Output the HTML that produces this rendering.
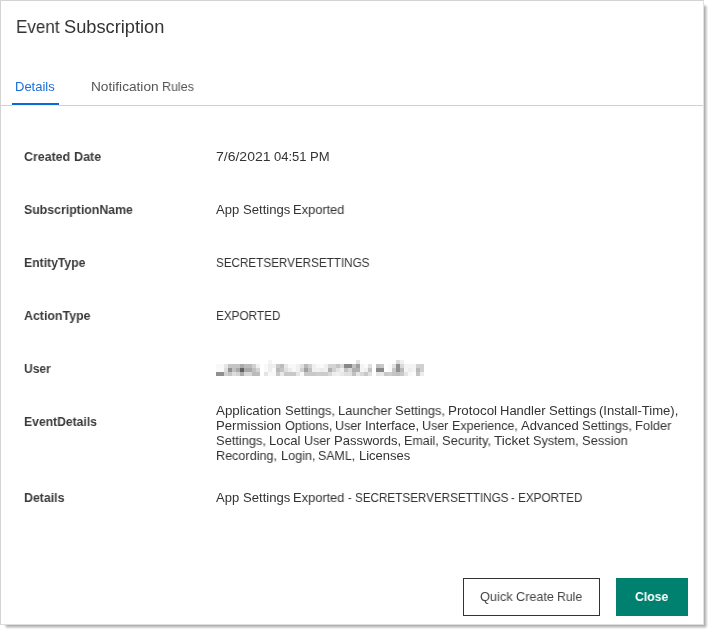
<!DOCTYPE html>
<html lang="en"><head><meta charset="utf-8"><title>Event Subscription</title>
<style>
html,body{margin:0;padding:0;background:#fff;}
body{width:712px;height:633px;position:relative;overflow:hidden;font-family:"Liberation Sans",sans-serif;color:#333;font-size:13px;line-height:15px;}
.panel{position:absolute;left:0;top:0;width:702px;height:623px;border:1px solid #d3d3d3;border-right-color:#e2e2e2;border-bottom-color:#dedede;background:#fff;}
.shr{position:absolute;left:704px;top:8px;width:4px;height:617px;background:linear-gradient(to right,#a6a6a6,#fafafa);}
.shb{position:absolute;left:8px;top:625px;width:696px;height:4px;background:linear-gradient(to bottom,#a6a6a6,#fafafa);}
.c1,.c2,.c3{position:absolute;width:4px;height:4px;}
.c1{left:704px;top:4px;background:radial-gradient(circle at 0 100%,#a6a6a6 0,#fafafa 4px,#fff 4.5px);}
.c2{left:704px;top:625px;background:radial-gradient(circle at 0 0,#a6a6a6 0,#fafafa 4px,#fff 4.5px);}
.c3{left:4px;top:625px;background:radial-gradient(circle at 100% 0,#a6a6a6 0,#fafafa 4px,#fff 4.5px);}
.w{position:absolute;transform-origin:0 0;white-space:nowrap;line-height:15px;font-size:13px;color:#333;will-change:transform;}
.w.b{font-weight:bold;color:#3a3a3a;}
.w.h{font-size:18px;line-height:24px;}
h1,dl,dt,dd,ul,li,p{margin:0;padding:0;font:inherit;list-style:none;}
.hr{position:absolute;left:1px;top:105px;width:702px;height:1px;background:#d0d0d0;}
.ul{position:absolute;left:12px;top:103px;width:47px;height:2px;background:#0c68d6;}
.ulw{position:absolute;left:12px;top:105px;width:47px;height:1px;background:#f3eee8;}
.blur{position:absolute;left:216px;top:360px;}
.btn{position:absolute;top:578px;height:38px;box-sizing:border-box;}
.q{left:463px;width:137px;border:1px solid #333;background:#fff;}
.c{left:616px;width:72px;background:#00806f;}
</style></head><body>
<div class="panel"></div><div class="shr"></div><div class="shb"></div><div class="c1"></div><div class="c2"></div><div class="c3"></div>
<h1><span class="w h" style="left:15.50px;top:15px;transform:scaleX(0.9460);">Event</span> <span class="w h" style="left:64.25px;top:15px;transform:scaleX(1.0136);">Subscription</span></h1>
<ul class="tabs"><li><span class="w" style="left:15.40px;top:79px;transform:scaleX(0.9998);color:#1a6fd8;">Details</span></li><li><span class="w" style="left:91.10px;top:79px;transform:scaleX(1.0514);color:#555;">Notification</span> <span class="w" style="left:161.93px;top:79px;transform:scaleX(0.9599);color:#555;">Rules</span></li></ul>
<div class="hr"></div><div class="ulw"></div><div class="ul"></div>
<dl>
<dt><span class="w b" style="left:24.45px;top:149px;transform:scaleX(0.9511);">Created</span> <span class="w b" style="left:73.78px;top:149px;transform:scaleX(0.9644);">Date</span></dt><dd><span class="w" style="left:216.30px;top:149px;transform:scaleX(1.0771);">7/6/2021</span> <span class="w" style="left:274.03px;top:149px;transform:scaleX(0.9939);">04:51</span> <span class="w" style="left:309.60px;top:149px;transform:scaleX(1.0026);">PM</span></dd>
<dt><span class="w b" style="left:24.45px;top:202px;transform:scaleX(0.9486);">SubscriptionName</span></dt><dd><span class="w" style="left:216.30px;top:202px;transform:scaleX(0.9968);">App</span> <span class="w" style="left:242.59px;top:202px;transform:scaleX(1.0092);">Settings</span> <span class="w" style="left:293.22px;top:202px;transform:scaleX(0.9876);">Exported</span></dd>
<dt><span class="w b" style="left:24.45px;top:255px;transform:scaleX(0.9386);">EntityType</span></dt><dd><span class="w" style="left:216.30px;top:255px;transform:scaleX(0.8976);">SECRETSERVERSETTINGS</span></dd>
<dt><span class="w b" style="left:24.45px;top:308px;transform:scaleX(0.9520);">ActionType</span></dt><dd><span class="w" style="left:216.30px;top:308px;transform:scaleX(0.9028);">EXPORTED</span></dd>
<dt><span class="w b" style="left:24.45px;top:361px;transform:scaleX(0.9290);">User</span></dt><dd><svg class="blur" width="208" height="16" viewBox="0 0 208 16" shape-rendering="crispEdges"><rect x="52" y="0" width="4" height="4" fill="#f4f4f4"/><rect x="140" y="0" width="4" height="4" fill="#e4e4e4"/><rect x="180" y="0" width="4" height="4" fill="#dcdcdc"/><rect x="184" y="0" width="4" height="4" fill="#f0f0f0"/><rect x="0" y="4" width="4" height="4" fill="#f8f8f8"/><rect x="4" y="4" width="4" height="4" fill="#f8f8f8"/><rect x="8" y="4" width="4" height="4" fill="#e6e6e6"/><rect x="12" y="4" width="4" height="4" fill="#c4c4c4"/><rect x="16" y="4" width="4" height="4" fill="#c4c4c4"/><rect x="20" y="4" width="4" height="4" fill="#c4c4c4"/><rect x="24" y="4" width="4" height="4" fill="#aaaaaa"/><rect x="28" y="4" width="4" height="4" fill="#bbbbbb"/><rect x="32" y="4" width="4" height="4" fill="#bbbbbb"/><rect x="36" y="4" width="4" height="4" fill="#d0d0d0"/><rect x="40" y="4" width="4" height="4" fill="#f0f0f0"/><rect x="48" y="4" width="4" height="4" fill="#f8f8f8"/><rect x="52" y="4" width="4" height="4" fill="#eeeeee"/><rect x="56" y="4" width="4" height="4" fill="#f0f0f0"/><rect x="60" y="4" width="4" height="4" fill="#c8c8c8"/><rect x="64" y="4" width="4" height="4" fill="#bbbbbb"/><rect x="68" y="4" width="4" height="4" fill="#e8e8e8"/><rect x="72" y="4" width="4" height="4" fill="#f8f8f8"/><rect x="76" y="4" width="4" height="4" fill="#f8f8f8"/><rect x="80" y="4" width="4" height="4" fill="#f0f0f0"/><rect x="84" y="4" width="4" height="4" fill="#e0e0e0"/><rect x="88" y="4" width="4" height="4" fill="#b8b8b8"/><rect x="92" y="4" width="4" height="4" fill="#d0d0d0"/><rect x="96" y="4" width="4" height="4" fill="#f0f0f0"/><rect x="100" y="4" width="4" height="4" fill="#f8f8f8"/><rect x="104" y="4" width="4" height="4" fill="#fafafa"/><rect x="108" y="4" width="4" height="4" fill="#f0f0f0"/><rect x="112" y="4" width="4" height="4" fill="#d4d4d4"/><rect x="116" y="4" width="4" height="4" fill="#d4d4d4"/><rect x="120" y="4" width="4" height="4" fill="#c4c4c4"/><rect x="124" y="4" width="4" height="4" fill="#d8d8d8"/><rect x="128" y="4" width="4" height="4" fill="#888888"/><rect x="132" y="4" width="4" height="4" fill="#888888"/><rect x="136" y="4" width="4" height="4" fill="#c0c0c0"/><rect x="140" y="4" width="4" height="4" fill="#a0a0a0"/><rect x="144" y="4" width="4" height="4" fill="#f4f4f4"/><rect x="148" y="4" width="4" height="4" fill="#fafafa"/><rect x="152" y="4" width="4" height="4" fill="#e0e0e0"/><rect x="160" y="4" width="4" height="4" fill="#c0c0c0"/><rect x="164" y="4" width="4" height="4" fill="#c8c8c8"/><rect x="172" y="4" width="4" height="4" fill="#fafafa"/><rect x="176" y="4" width="4" height="4" fill="#e0e0e0"/><rect x="180" y="4" width="4" height="4" fill="#909090"/><rect x="184" y="4" width="4" height="4" fill="#d8d8d8"/><rect x="188" y="4" width="4" height="4" fill="#f4f4f4"/><rect x="192" y="4" width="4" height="4" fill="#f4f4f4"/><rect x="196" y="4" width="4" height="4" fill="#f4f4f4"/><rect x="200" y="4" width="4" height="4" fill="#d0d0d0"/><rect x="204" y="4" width="4" height="4" fill="#d0d0d0"/><rect x="0" y="8" width="4" height="4" fill="#fafafa"/><rect x="4" y="8" width="4" height="4" fill="#fafafa"/><rect x="8" y="8" width="4" height="4" fill="#dddddd"/><rect x="12" y="8" width="4" height="4" fill="#909090"/><rect x="16" y="8" width="4" height="4" fill="#c0c0c0"/><rect x="20" y="8" width="4" height="4" fill="#a8a8a8"/><rect x="24" y="8" width="4" height="4" fill="#606060"/><rect x="28" y="8" width="4" height="4" fill="#a8a8a8"/><rect x="32" y="8" width="4" height="4" fill="#a8a8a8"/><rect x="36" y="8" width="4" height="4" fill="#c0c0c0"/><rect x="40" y="8" width="4" height="4" fill="#d4d4d4"/><rect x="48" y="8" width="4" height="4" fill="#fafafa"/><rect x="52" y="8" width="4" height="4" fill="#eeeeee"/><rect x="56" y="8" width="4" height="4" fill="#fafafa"/><rect x="60" y="8" width="4" height="4" fill="#b8b8b8"/><rect x="64" y="8" width="4" height="4" fill="#c4c4c4"/><rect x="68" y="8" width="4" height="4" fill="#e0e0e0"/><rect x="72" y="8" width="4" height="4" fill="#ececec"/><rect x="76" y="8" width="4" height="4" fill="#f8f8f8"/><rect x="80" y="8" width="4" height="4" fill="#f0f0f0"/><rect x="84" y="8" width="4" height="4" fill="#d0d0d0"/><rect x="88" y="8" width="4" height="4" fill="#a0a0a0"/><rect x="92" y="8" width="4" height="4" fill="#c0c0c0"/><rect x="96" y="8" width="4" height="4" fill="#f0f0f0"/><rect x="100" y="8" width="4" height="4" fill="#f0f0f0"/><rect x="104" y="8" width="4" height="4" fill="#ececec"/><rect x="108" y="8" width="4" height="4" fill="#f0f0f0"/><rect x="112" y="8" width="4" height="4" fill="#b0b0b0"/><rect x="116" y="8" width="4" height="4" fill="#d0d0d0"/><rect x="120" y="8" width="4" height="4" fill="#e4e4e4"/><rect x="124" y="8" width="4" height="4" fill="#f0f0f0"/><rect x="128" y="8" width="4" height="4" fill="#c4c4c4"/><rect x="132" y="8" width="4" height="4" fill="#d8d8d8"/><rect x="136" y="8" width="4" height="4" fill="#b0b0b0"/><rect x="140" y="8" width="4" height="4" fill="#b0b0b0"/><rect x="144" y="8" width="4" height="4" fill="#f4f4f4"/><rect x="148" y="8" width="4" height="4" fill="#f0f0f0"/><rect x="152" y="8" width="4" height="4" fill="#c4c4c4"/><rect x="160" y="8" width="4" height="4" fill="#888888"/><rect x="164" y="8" width="4" height="4" fill="#888888"/><rect x="172" y="8" width="4" height="4" fill="#fafafa"/><rect x="176" y="8" width="4" height="4" fill="#c8c8c8"/><rect x="180" y="8" width="4" height="4" fill="#909090"/><rect x="184" y="8" width="4" height="4" fill="#b8b8b8"/><rect x="188" y="8" width="4" height="4" fill="#f4f4f4"/><rect x="192" y="8" width="4" height="4" fill="#eeeeee"/><rect x="196" y="8" width="4" height="4" fill="#f4f4f4"/><rect x="200" y="8" width="4" height="4" fill="#b8b8b8"/><rect x="204" y="8" width="4" height="4" fill="#d0d0d0"/><rect x="0" y="12" width="4" height="4" fill="#909090"/><rect x="4" y="12" width="4" height="4" fill="#909090"/><rect x="8" y="12" width="4" height="4" fill="#d0d0d0"/><rect x="12" y="12" width="4" height="4" fill="#c4c4c4"/><rect x="16" y="12" width="4" height="4" fill="#dddddd"/><rect x="20" y="12" width="4" height="4" fill="#d4d4d4"/><rect x="24" y="12" width="4" height="4" fill="#aaaaaa"/><rect x="28" y="12" width="4" height="4" fill="#d8d8d8"/><rect x="32" y="12" width="4" height="4" fill="#d8d8d8"/><rect x="36" y="12" width="4" height="4" fill="#bbbbbb"/><rect x="40" y="12" width="4" height="4" fill="#bbbbbb"/><rect x="48" y="12" width="4" height="4" fill="#e4e4e4"/><rect x="52" y="12" width="4" height="4" fill="#f8f8f8"/><rect x="56" y="12" width="4" height="4" fill="#f8f8f8"/><rect x="60" y="12" width="4" height="4" fill="#c8c8c8"/><rect x="64" y="12" width="4" height="4" fill="#e8e8e8"/><rect x="68" y="12" width="4" height="4" fill="#c8c8c8"/><rect x="72" y="12" width="4" height="4" fill="#c8c8c8"/><rect x="76" y="12" width="4" height="4" fill="#c8c8c8"/><rect x="80" y="12" width="4" height="4" fill="#e4e4e4"/><rect x="84" y="12" width="4" height="4" fill="#f8f8f8"/><rect x="88" y="12" width="4" height="4" fill="#c8c8c8"/><rect x="92" y="12" width="4" height="4" fill="#c8c8c8"/><rect x="96" y="12" width="4" height="4" fill="#c8c8c8"/><rect x="100" y="12" width="4" height="4" fill="#cccccc"/><rect x="104" y="12" width="4" height="4" fill="#cccccc"/><rect x="108" y="12" width="4" height="4" fill="#cccccc"/><rect x="112" y="12" width="4" height="4" fill="#d8d8d8"/><rect x="116" y="12" width="4" height="4" fill="#ececec"/><rect x="120" y="12" width="4" height="4" fill="#f0f0f0"/><rect x="124" y="12" width="4" height="4" fill="#e8e8e8"/><rect x="128" y="12" width="4" height="4" fill="#e0e0e0"/><rect x="132" y="12" width="4" height="4" fill="#e0e0e0"/><rect x="136" y="12" width="4" height="4" fill="#c0c0c0"/><rect x="140" y="12" width="4" height="4" fill="#e4e4e4"/><rect x="144" y="12" width="4" height="4" fill="#d8d8d8"/><rect x="148" y="12" width="4" height="4" fill="#c8c8c8"/><rect x="152" y="12" width="4" height="4" fill="#e0e0e0"/><rect x="160" y="12" width="4" height="4" fill="#e4e4e4"/><rect x="164" y="12" width="4" height="4" fill="#e8e8e8"/><rect x="168" y="12" width="4" height="4" fill="#c8c8c8"/><rect x="172" y="12" width="4" height="4" fill="#cccccc"/><rect x="176" y="12" width="4" height="4" fill="#c4c4c4"/><rect x="180" y="12" width="4" height="4" fill="#c0c0c0"/><rect x="184" y="12" width="4" height="4" fill="#c8c8c8"/><rect x="188" y="12" width="4" height="4" fill="#e4e4e4"/><rect x="192" y="12" width="4" height="4" fill="#f8f8f8"/><rect x="196" y="12" width="4" height="4" fill="#fcfcfc"/><rect x="200" y="12" width="4" height="4" fill="#c4c4c4"/><rect x="204" y="12" width="4" height="4" fill="#ececec"/></svg></dd>
<dt><span class="w b" style="left:24.45px;top:414px;transform:scaleX(0.9348);">EventDetails</span></dt><dd><span class="w" style="left:216.30px;top:403px;transform:scaleX(1.0257);">Application</span> <span class="w" style="left:284.76px;top:403px;transform:scaleX(0.9876);">Settings,</span> <span class="w" style="left:337.95px;top:403px;transform:scaleX(0.9896);">Launcher</span> <span class="w" style="left:394.82px;top:403px;transform:scaleX(0.9876);">Settings,</span> <span class="w" style="left:448.01px;top:403px;transform:scaleX(1.0282);">Protocol</span> <span class="w" style="left:500.28px;top:403px;transform:scaleX(0.9946);">Handler</span> <span class="w" style="left:548.78px;top:403px;transform:scaleX(1.0092);">Settings</span> <span class="w" style="left:599.41px;top:403px;transform:scaleX(1.0046);">(Install-Time),</span>
<span class="w" style="left:216.30px;top:418px;transform:scaleX(1.0138);">Permission</span> <span class="w" style="left:284.70px;top:418px;transform:scaleX(0.9804);">Options,</span> <span class="w" style="left:335.39px;top:418px;transform:scaleX(0.9623);">User</span> <span class="w" style="left:365.03px;top:418px;transform:scaleX(0.9975);">Interface,</span> <span class="w" style="left:422.32px;top:418px;transform:scaleX(0.9623);">User</span> <span class="w" style="left:451.96px;top:418px;transform:scaleX(0.9594);">Experience,</span> <span class="w" style="left:521.04px;top:418px;transform:scaleX(0.9922);">Advanced</span> <span class="w" style="left:581.64px;top:418px;transform:scaleX(0.9876);">Settings,</span> <span class="w" style="left:634.83px;top:418px;transform:scaleX(0.9868);">Folder</span>
<span class="w" style="left:216.30px;top:433px;transform:scaleX(0.9876);">Settings,</span> <span class="w" style="left:269.49px;top:433px;transform:scaleX(1.0116);">Local</span> <span class="w" style="left:304.15px;top:433px;transform:scaleX(0.9623);">User</span> <span class="w" style="left:333.78px;top:433px;transform:scaleX(0.9947);">Passwords,</span> <span class="w" style="left:403.85px;top:433px;transform:scaleX(0.9610);">Email,</span> <span class="w" style="left:441.78px;top:433px;transform:scaleX(0.9892);">Security,</span> <span class="w" style="left:494.07px;top:433px;transform:scaleX(1.0361);">Ticket</span> <span class="w" style="left:532.73px;top:433px;transform:scaleX(0.9718);">System,</span> <span class="w" style="left:581.59px;top:433px;transform:scaleX(0.9891);">Session</span>
<span class="w" style="left:216.30px;top:448px;transform:scaleX(0.9704);">Recording,</span> <span class="w" style="left:280.53px;top:448px;transform:scaleX(0.9763);">Login,</span> <span class="w" style="left:318.33px;top:448px;transform:scaleX(0.9506);">SAML,</span> <span class="w" style="left:358.64px;top:448px;transform:scaleX(0.9999);">Licenses</span></dd>
<dt><span class="w b" style="left:24.45px;top:490px;transform:scaleX(0.9479);">Details</span></dt><dd><span class="w" style="left:216.30px;top:490px;transform:scaleX(0.9968);">App</span> <span class="w" style="left:242.59px;top:490px;transform:scaleX(1.0092);">Settings</span> <span class="w" style="left:293.22px;top:490px;transform:scaleX(0.9876);">Exported</span> <span class="w" style="left:347.84px;top:490px;transform:scaleX(0.8257);">-</span> <span class="w" style="left:354.65px;top:490px;transform:scaleX(0.8976);">SECRETSERVERSETTINGS</span> <span class="w" style="left:511.33px;top:490px;transform:scaleX(0.8257);">-</span> <span class="w" style="left:518.14px;top:490px;transform:scaleX(0.9028);">EXPORTED</span></dd>
</dl>
<div class="btn q"></div><div class="btn c"></div>
<div class="btxt"><span class="w" style="left:480.10px;top:589px;transform:scaleX(0.9825);color:#444;">Quick</span> <span class="w" style="left:515.97px;top:589px;transform:scaleX(0.9724);color:#444;">Create</span> <span class="w" style="left:557.14px;top:589px;transform:scaleX(0.9425);color:#444;">Rule</span></div><div class="btxt"><span class="w b" style="left:635.30px;top:589px;transform:scaleX(0.9370);color:#fff;">Close</span></div>
</body></html>
